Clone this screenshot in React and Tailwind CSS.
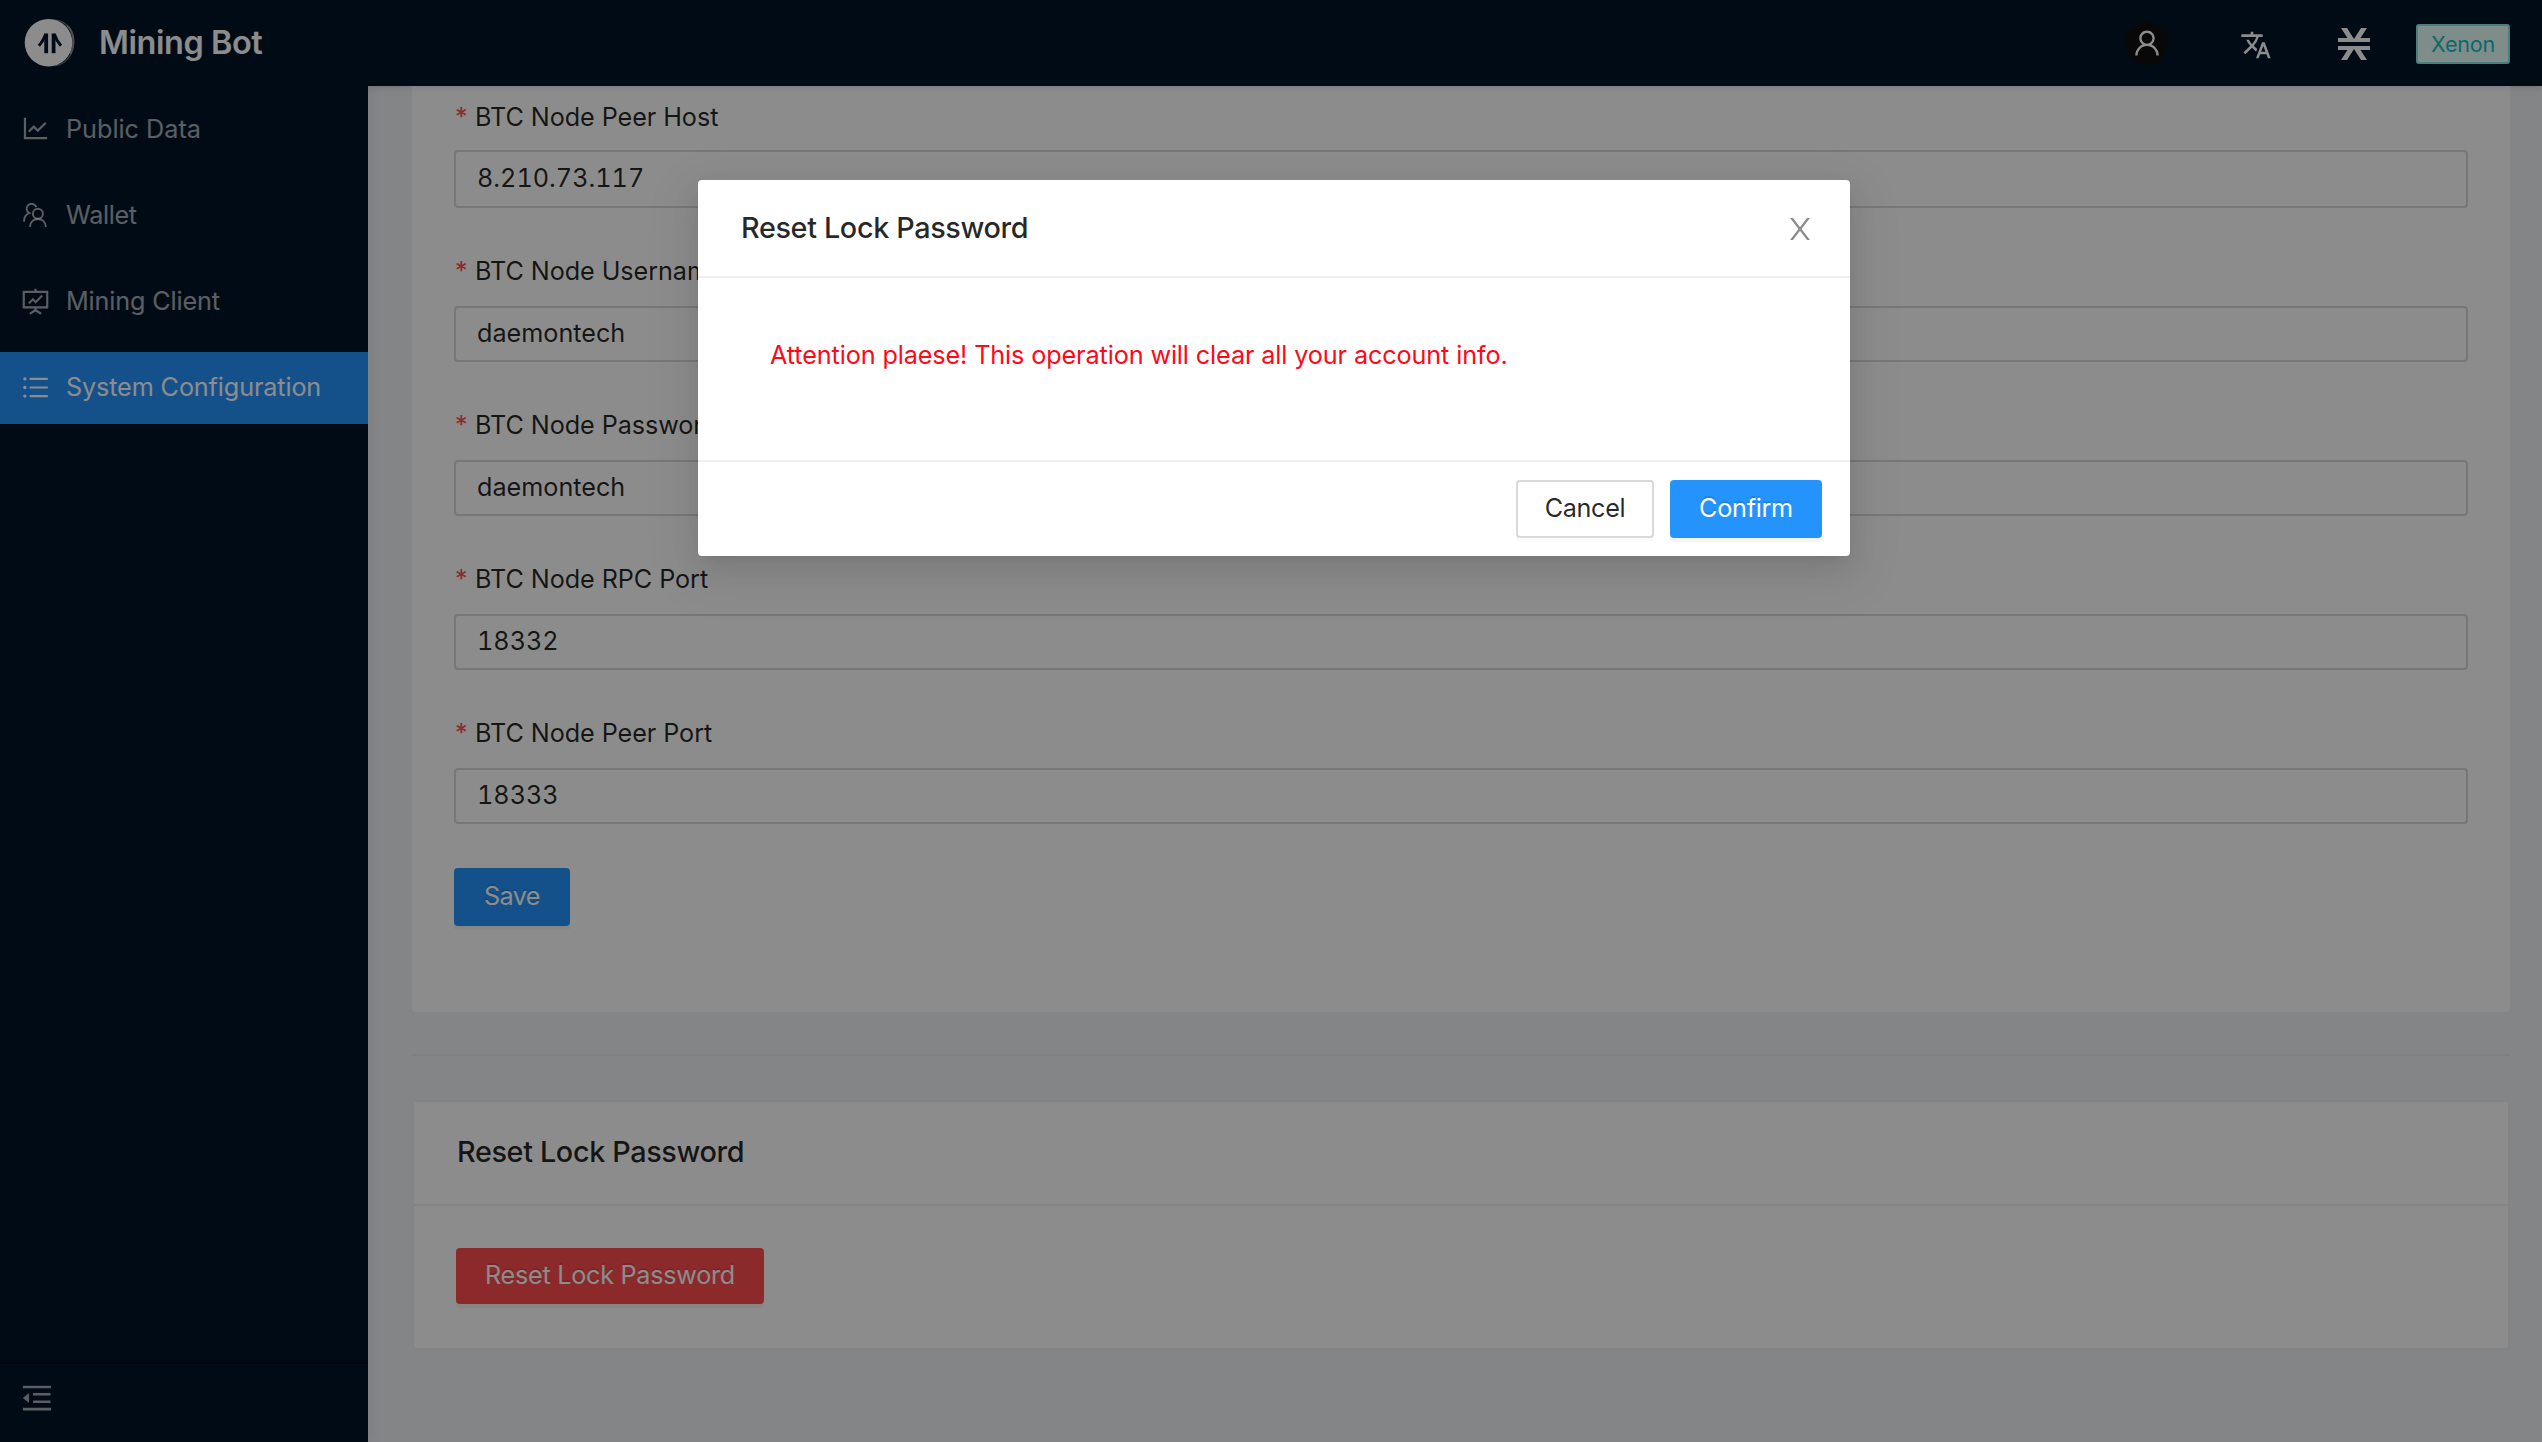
import React from "react";
import {
  AiOutlineLineChart,
  AiOutlineFundProjectionScreen,
  AiOutlineUnorderedList,
  AiOutlineMenuFold,
  AiOutlineUser,
} from "react-icons/ai";
import { MdTranslate } from "react-icons/md";

function Logo() {
  return (
    <svg className="h-[52px] w-[56px] shrink-0" viewBox="0 0 56 52">
      <path d="M28 3.2C42 2 51 12 50.6 26 50 39 42 47 32 49" fill="none" stroke="#6b7176" strokeWidth="1.2" />
      <path d="M44 8.5C51 15 52.5 27 47.5 37" fill="none" stroke="#8d9194" strokeWidth="2" />
      <circle cx="25.5" cy="25.7" r="23.8" fill="#fff" />
      <g fill="none" stroke="#001529" strokeWidth="3.8">
        <path d="M23.2 16.5V36.2" />
        <path d="M30.6 16.5V36.2" />
        <path d="M22.8 17C20.8 22 19 25.500 15.800 28.800" strokeWidth="3" />
        <path d="M31.2 17C33 22 35 25.500 38 28.800" strokeWidth="3" />
      </g>
    </svg>
  );
}

function WalletIcon() {
  return (
    <svg className="h-[24px] w-[24px]" viewBox="0 0 24 24" fill="none" stroke="currentColor" strokeWidth="1.9">
      <circle cx="14.9" cy="10.8" r="5" />
      <path d="M6.9 24C7 19 10.5 16 14.9 16C19.3 16 22.8 19 22.9 24" />
      <path d="M13.4 4.2A5 5 0 1 0 6.3 10.2C3 11.4 1 14.5 1 18.7" />
    </svg>
  );
}

function NetworkIcon() {
  return (
    <svg className="h-[32px] w-[32px]" viewBox="0 0 32 32" fill="#fff">
      <path d="M3 0H9L16 11L23 0H29L22.5 10H32V14H0V10H9.5Z" />
      <path d="M3 32H9L16 21L23 32H29L22.5 22H32V18H0V22H9.5Z" />
    </svg>
  );
}

function CloseIcon() {
  return (
    <svg className="h-[22px] w-[20px]" viewBox="0 0 20 22" fill="#8c8c8c">
      <path d="M0 0H3L10 9.2L17 0H20L11.5 11L20 22H17L10 12.8L3 22H0L8.5 11Z" />
    </svg>
  );
}

const menu = [
  { label: "Public Data", icon: <AiOutlineLineChart size={31} className="-mt-[2px]" />, spacing: "tracking-[0px]" },
  { label: "Wallet", icon: <WalletIcon />, spacing: "tracking-[-0.37px]" },
  { label: "Mining Client", icon: <AiOutlineFundProjectionScreen size={31} />, spacing: "tracking-[-0.14px]" },
  { label: "System Configuration", icon: <AiOutlineUnorderedList size={31} />, spacing: "tracking-[-0.12px]", active: true },
];

const fields = [
  { label: "BTC Node Peer Host", value: "8.210.73.117", row: "h-[64px]", box: "h-[58px]", text: "tabular-nums" },
  { label: "BTC Node Username", value: "daemontech", row: "mt-[30px] h-[68px]", box: "h-[56px]", text: "" },
  { label: "BTC Node Password", value: "daemontech", row: "mt-[30px] h-[68px]", box: "h-[56px]", text: "" },
  { label: "BTC Node RPC Port", value: "18332", row: "mt-[30px] h-[68px]", box: "h-[56px]", text: "tabular-nums" },
  { label: "BTC Node Peer Port", value: "18333", row: "mt-[30px] h-[68px]", box: "h-[56px]", text: "tabular-nums" },
];

function Header() {
  return (
    <header className="relative z-10 flex h-[86px] shrink-0 items-center justify-between bg-[#001529] pr-[32px] pl-[23px] shadow-[0_2px_7px_rgba(0,21,41,0.12)]">
      <div className="flex items-center">
        <Logo />
        <h1 className="ml-[20px] pb-[1px] text-[32.4px] leading-[40px] font-semibold tracking-[-0.41px] text-white">Mining Bot</h1>
      </div>
      <div className="flex items-center">
        <span className="flex h-[43px] w-[43px] items-center justify-center rounded-full bg-[#101010] pb-[1px] pl-[1px] text-white">
          <AiOutlineUser size={32} />
        </span>
        <MdTranslate size={32} className="mt-[3px] ml-[72px] text-white" />
        <span className="mt-[2px] ml-[66px]"><NetworkIcon /></span>
        <span className="mt-[2px] ml-[46px] flex h-[40px] w-[94px] items-center justify-center rounded-[3px] border-2 border-[#87e8de] bg-[#e6fffb] text-[21.6px] tracking-[-0.28px] text-[#13c2c2]">
          Xenon
        </span>
      </div>
    </header>
  );
}

function Sidebar() {
  return (
    <aside className="relative z-[5] flex w-[368px] shrink-0 flex-col justify-between bg-[#001529] shadow-[4px_0_14px_rgba(29,35,41,0.05)]">
      <nav className="mt-[8px] flex flex-col gap-[14px]">
        {menu.map((m) => (
          <a
            key={m.label}
            className={
              m.active
                ? "flex h-[72px] items-center bg-[#2593fc] pb-[2px] text-white"
                : "flex h-[72px] items-center pb-[2px] text-white/65"
            }
          >
            <span className="ml-[19px] flex w-[32px] justify-center">{m.icon}</span>
            <span className={`ml-[15px] pt-[1px] text-[25.2px] whitespace-nowrap ${m.spacing}`}>{m.label}</span>
          </a>
        ))}
      </nav>
      <div className="flex h-[80px] items-center border-t-2 border-[#000c17] pb-[11px] pl-[19px] text-white/65">
        <AiOutlineMenuFold size={36} />
      </div>
    </aside>
  );
}

function Content() {
  return (
    <main className="flex flex-1 flex-col bg-[#f0f2f5] pr-[32px] pl-[44px]">
      <section className="h-[926px] rounded-b-[4px] bg-white px-[42px]">
        {fields.map((f) => (
          <div key={f.label}>
            <label className={`flex items-center ${f.row}`}>
              <span className="w-[21px] pl-[1px] text-[25.2px] text-[#ff4d4f]">*</span>
              <span className="text-[25.2px] tracking-[-0.07px]">{f.label}</span>
            </label>
            <div className={`flex items-center rounded-[4px] border-2 border-[#d9d9d9] bg-white pl-[21px] ${f.box}`}>
              <span className={`text-[25.2px] ${f.text}`}>{f.value}</span>
            </div>
          </div>
        ))}
        <button className="mt-[44px] flex h-[58px] w-[116px] items-center justify-center rounded-[4px] bg-[#2593fc] text-[25.2px] tracking-[-0.6px] text-white shadow-[0_4px_0_rgba(0,0,0,0.045)] [text-shadow:0_-2px_0_rgba(0,0,0,0.12)]">
          Save
        </button>
      </section>
      <hr className="mt-[42px] h-[2px] border-0 bg-[#e6e7e9]" />
      <section className="mt-[44px] rounded-[4px] border-2 border-[#f0f0f0] bg-white">
        <h2 className="flex h-[104px] items-center border-b-2 border-[#f0f0f0] px-[43px] pb-[2px] text-[28.8px] font-medium tracking-[-0.36px]">
          Reset Lock Password
        </h2>
        <div className="h-[142px] px-[42px] pt-[42px]">
          <button className="flex h-[56px] w-[308px] items-center justify-center rounded-[4px] bg-[#ff4d4f] text-[25.2px] tracking-[-0.26px] text-white shadow-[0_4px_0_rgba(0,0,0,0.045)] [text-shadow:0_-2px_0_rgba(0,0,0,0.12)]">
            Reset Lock Password
          </button>
        </div>
      </section>
    </main>
  );
}

function Modal() {
  return (
    <div className="absolute inset-0 z-20 flex items-start bg-black/45 pt-[180px] pl-[698px]">
      <div
        role="dialog"
        className="flex h-[376px] w-[1152px] flex-col rounded-[4px] bg-white shadow-[0_5px_11px_-7px_rgba(0,0,0,0.12),0_11px_29px_rgba(0,0,0,0.08),0_16px_50px_14px_rgba(0,0,0,0.05)]"
      >
        <div className="flex h-[98px] items-center justify-between border-b-2 border-[#f0f0f0] pr-[40px] pl-[43px]">
          <h2 className="text-[28.8px] font-medium tracking-[-0.36px]">Reset Lock Password</h2>
          <span className="pt-[1px]"><CloseIcon /></span>
        </div>
        <p className="flex h-[182px] items-start pt-[57px] pl-[72px] text-[25.2px] leading-[40px] tracking-[-0.11px] text-[#ff0818]">
          Attention plaese! This operation will clear all your account info.
        </p>
        <div className="flex h-[96px] items-start justify-end gap-[16px] border-t-2 border-[#f0f0f0] pt-[18px] pr-[28px]">
          <button className="flex h-[58px] w-[138px] items-center justify-center rounded-[4px] border-2 border-[#d9d9d9] bg-white text-[25.2px] tracking-[-0.36px] shadow-[0_4px_0_rgba(0,0,0,0.016)]">
            Cancel
          </button>
          <button className="flex h-[58px] w-[152px] items-center justify-center rounded-[4px] bg-[#2593fc] text-[25.2px] tracking-[-0.28px] text-white shadow-[0_4px_0_rgba(0,0,0,0.045)] [text-shadow:0_-2px_0_rgba(0,0,0,0.12)]">
            Confirm
          </button>
        </div>
      </div>
    </div>
  );
}

export default function App() {
  return (
    <div className="relative flex h-[1442px] w-[2542px] flex-col overflow-hidden bg-[#f0f2f5] font-[Inter,'Liberation_Sans',sans-serif] text-black/85">
      <Header />
      <div className="flex min-h-0 flex-1">
        <Sidebar />
        <Content />
      </div>
      <Modal />
    </div>
  );
}
